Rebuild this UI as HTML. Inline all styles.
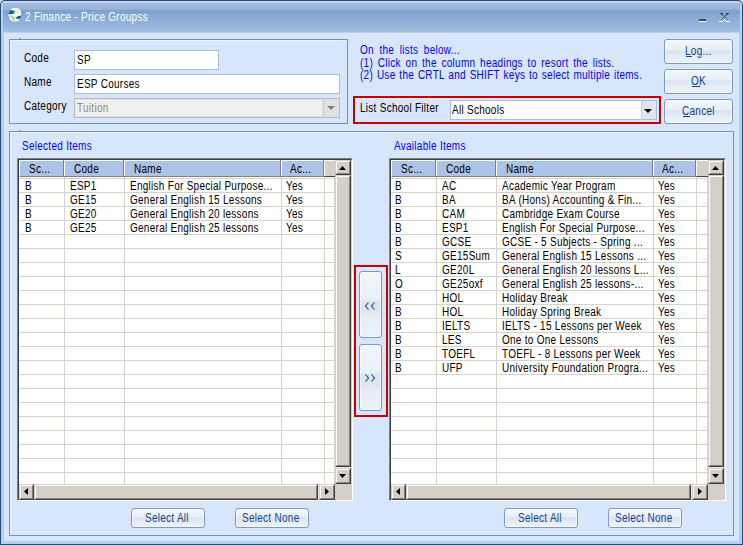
<!DOCTYPE html>
<html><head><meta charset="utf-8">
<style>
*{box-sizing:border-box}
html,body{margin:0;padding:0}
body{width:743px;height:545px;overflow:hidden;position:relative;background:#d8e6fb;font-family:"Liberation Sans",sans-serif;font-size:12px;color:#000}
.a{position:absolute}
.t{position:absolute;white-space:nowrap;line-height:13px;font-size:12px;letter-spacing:0.35px;transform:scaleX(0.83);transform-origin:0 0}
.u{position:absolute;height:1px;background:#15428b}
#frame{left:0;top:0;width:743px;height:545px;background:#2c4a74;border-radius:5px 5px 0 0}
#inner{left:1px;top:1px;width:741px;height:543px;background:#b4cff2;border-radius:4px 4px 0 0}
#title{left:3px;top:1px;width:737px;height:32px;border-radius:3px 3px 0 0;
 background:linear-gradient(#c0d7f6 0px,#c0d7f6 2px,#a2badc 2px,#9ab4d9 8px,#85a8d3 9px,#7ba1d0 10px,#85a8d5 14px,#9cb9e0 28px,#a2bfe5 31px,#b7d0f2 31px)}
#body{left:4px;top:33px;width:735px;height:508px;background:#d8e6fb}
.grp{position:absolute;border:1px solid #7090c2;box-shadow:inset 1px 1px 0 #e9f2fe}
.inp{position:absolute;background:#fff;border:1px solid #a9bfdc}
.btn{position:absolute;border:1px solid #7d98c4;border-radius:3px;
 background:linear-gradient(#f2f6fc 0%,#eaf0f9 42%,#dbe4f1 46%,#dde6f2 60%,#e5ecf6 68%,#edf2f9 100%);box-shadow:inset 0 0 0 1px rgba(255,255,255,.55)}
.lv{position:absolute;background:#fff;border-style:solid;border-width:1px;border-color:#808080 #fff #fff #808080}
.lvi{position:absolute;left:0;top:0;right:0;bottom:0;border-style:solid;border-width:1px 1px 0 1px;border-color:#404040 #d4d0c8 #d4d0c8 #404040;overflow:hidden}
.hd{position:absolute;top:0;height:17px;background:#abc3e7;border-top:1px solid #fff;border-left:1px solid #fff;border-bottom:1px solid #808080}
.sep{position:absolute;top:0;width:2px;height:16px;border-left:1px solid #808080;border-right:1px solid #fff}
.gv{position:absolute;width:1px;background:#d6d3ca}
.gh{position:absolute;height:1px;background:#d6d3ca}
.sb{position:absolute;background:#d4d0c8;border-style:solid;border-width:1px;border-color:#d4d0c8 #404040 #404040 #d4d0c8}
.sbi{position:absolute;left:0;top:0;right:0;bottom:0;border-style:solid;border-width:1px;border-color:#fff #808080 #808080 #fff}
.blue{color:#0000ff}
.nb{color:#15428b}
</style></head><body>
<div class="a" id="frame"></div>
<div class="a" id="inner"></div>
<div class="a" id="title"></div>
<div class="a" id="body"></div>
<svg class="a" style="left:7px;top:7px" width="16" height="16" viewBox="0 0 16 16">
 <circle cx="8" cy="7.8" r="7" fill="#f2f8e8"/>
 <path d="M3.5 8.5 L5.5 11 L7.5 13.5 M5.5 11 L8 10" stroke="#a9c77c" stroke-width="1.6" fill="none" opacity=".8"/>
 <circle cx="10" cy="5" r="2" fill="#e8f2d8"/>
 <path d="M3.0 2.9 L8.0 4.0 L6.5 7.0 L0.9 7.3 Z" fill="#0d5fb2"/>
 <path d="M8.5 11.6 L10.5 9.2 L15.1 8.3 L13.0 12.3 Z" fill="#0d5fb2"/>
 <path d="M1.2 8.5 A7 7 0 0 0 2.2 11.5" stroke="#3d7fc4" stroke-width="1" fill="none" opacity=".6"/>
 <path d="M14.6 5 A7 7 0 0 1 14.9 7.5" stroke="#1f6cbf" stroke-width="1.2" fill="none" opacity=".7"/>
</svg>
<div class="t" style="left:25px;top:11px;color:#fff">2 Finance - Price Groupss</div>
<div class="a" style="left:699px;top:19px;width:7px;height:2px;background:#414a58"></div>
<div class="a" style="left:699px;top:21px;width:7px;height:1px;background:#fff"></div>
<svg class="a" style="left:719px;top:12px" width="12" height="11" shape-rendering="crispEdges">
 <rect x="1" y="1" width="3" height="1" fill="#3d4450"/><rect x="7" y="1" width="3" height="1" fill="#3d4450"/>
 <rect x="2" y="2" width="2" height="1" fill="#4d5562"/><rect x="7" y="2" width="2" height="1" fill="#4d5562"/>
 <rect x="3" y="3" width="2" height="1" fill="#667080"/><rect x="6" y="3" width="2" height="1" fill="#667080"/>
 <rect x="4" y="4" width="3" height="2" fill="#737c8a"/>
 <rect x="3" y="6" width="2" height="1" fill="#7d8694"/><rect x="6" y="6" width="2" height="1" fill="#7d8694"/>
 <rect x="2" y="7" width="2" height="1" fill="#8a93a0"/><rect x="7" y="7" width="2" height="1" fill="#8a93a0"/>
 <rect x="5" y="7" width="1" height="1" fill="#ffffff"/>
 <rect x="4" y="8" width="1" height="1" fill="#ffffff"/><rect x="6" y="8" width="1" height="1" fill="#ffffff"/>
 <rect x="0" y="9" width="4" height="1" fill="#ffffff"/><rect x="7" y="9" width="4" height="1" fill="#ffffff"/>
</svg>
<div class="grp" style="left:9px;top:39px;width:339px;height:85px"></div>
<div class="a" style="left:19px;top:38px;width:2px;height:1px;background:#7d9ccc"></div>
<div class="t" style="left:24px;top:52px;">Code</div>
<div class="t" style="left:24px;top:76px;">Name</div>
<div class="t" style="left:24px;top:100px;">Category</div>
<div class="inp" style="left:74px;top:50px;width:145px;height:20px"></div>
<div class="t" style="left:77px;top:54px;">SP</div>
<div class="inp" style="left:74px;top:74px;width:266px;height:20px"></div>
<div class="t" style="left:77px;top:78px;">ESP Courses</div>
<div class="a" style="left:74px;top:98px;width:266px;height:20px;background:#f0f0f0;border:1px solid #bcbcbc"></div>
<div class="a" style="left:75px;top:99px;width:248px;height:18px;border:1px solid #e4e4e4"></div>
<div class="a" style="left:323px;top:99px;width:16px;height:18px;background:#e2e2e2;border-left:1px solid #cfcfcf"></div>
<svg class="a" style="left:323px;top:99px" width="16" height="18"><path d="M4 7h8l-4 4z" fill="#808080"/></svg>
<div class="t" style="left:77px;top:102px;color:#8d8d8d">Tuition</div>
<div class="t blue" style="left:360px;top:44px;word-spacing:3px">On the lists below...</div>
<div class="t blue" style="left:360px;top:57px;word-spacing:2.05px">(1) Click on the column headings to resort the lists.</div>
<div class="t blue" style="left:360px;top:69px;word-spacing:0.95px">(2) Use the CRTL and SHIFT keys to select multiple items.</div>
<div class="a" style="left:353px;top:96px;width:308px;height:28px;border:2px solid #c80000"></div>
<div class="t" style="left:360px;top:102px;">List School Filter</div>
<div class="inp" style="left:450px;top:100px;width:207px;height:20px"></div>
<div class="a" style="left:641px;top:101px;width:15px;height:18px;background:#dde6f2;border-left:1px solid #c9d6e8"></div>
<svg class="a" style="left:641px;top:101px" width="15" height="18"><path d="M3 8h8l-4 4z" fill="#000"/></svg>
<div class="t" style="left:452px;top:104px;">All Schools</div>
<div class="btn" style="left:664px;top:39px;width:69px;height:25px"></div>
<div class="t nb" style="left:685px;top:45px;">Log...</div>
<div class="u" style="left:686px;top:56px;width:6px"></div>
<div class="btn" style="left:664px;top:69px;width:69px;height:25px"></div>
<div class="t nb" style="left:691px;top:75px;">OK</div>
<div class="u" style="left:692px;top:86px;width:8px"></div>
<div class="btn" style="left:664px;top:99px;width:69px;height:25px"></div>
<div class="t nb" style="left:682px;top:105px;">Cancel</div>
<div class="u" style="left:683px;top:116px;width:7px"></div>
<div class="grp" style="left:9px;top:131px;width:725px;height:405px"></div>
<div class="a" style="left:19px;top:130px;width:2px;height:1px;background:#7d9ccc"></div>
<div class="t blue" style="left:22px;top:140px;">Selected Items</div>
<div class="t blue" style="left:394px;top:140px;">Available Items</div>
<div class="a" style="left:354px;top:265px;width:34px;height:152px;border:2px solid #c80000"></div>
<div class="btn" style="left:359px;top:271px;width:23px;height:67px"></div>
<div class="btn" style="left:359px;top:344px;width:23px;height:67px"></div>
<svg class="a" style="left:362px;top:301px" width="16" height="10"><path d="M6.5 1.5 L3.5 5 L6.5 8.5 M12.5 1.5 L9.5 5 L12.5 8.5" stroke="#1e3f8f" stroke-width="1.1" fill="none"/></svg>
<svg class="a" style="left:362px;top:373px" width="16" height="10"><path d="M3.5 1.5 L6.5 5 L3.5 8.5 M9.5 1.5 L12.5 5 L9.5 8.5" stroke="#1e3f8f" stroke-width="1.1" fill="none"/></svg>
<div class="btn" style="left:131px;top:508px;width:74px;height:20px"></div>
<div class="t nb" style="left:145px;top:512px;">Select All</div>
<div class="btn" style="left:235px;top:508px;width:74px;height:20px"></div>
<div class="t nb" style="left:242px;top:512px;">Select None</div>
<div class="btn" style="left:504px;top:508px;width:74px;height:20px"></div>
<div class="t nb" style="left:518px;top:512px;">Select All</div>
<div class="btn" style="left:608px;top:508px;width:74px;height:20px"></div>
<div class="t nb" style="left:615px;top:512px;">Select None</div>
<div class="lv" style="left:17px;top:158px;width:336px;height:343px"><div class="lvi">
<div class="hd" style="left:0;width:316px"></div>
<div class="sep" style="left:44px"></div>
<div class="sep" style="left:104px"></div>
<div class="sep" style="left:261px"></div>
<div class="sep" style="left:304px"></div>
<div class="a" style="left:306px;top:0;width:10px;height:17px;background:#d4d0c8;border-top:1px solid #fff;border-bottom:1px solid #404040"></div>
<div class="t" style="left:10px;top:3px;">Sc...</div>
<div class="t" style="left:55px;top:3px;">Code</div>
<div class="t" style="left:115px;top:3px;">Name</div>
<div class="t" style="left:271px;top:3px;">Ac...</div>
<div class="gv" style="left:45px;top:17px;height:307px"></div>
<div class="gv" style="left:105px;top:17px;height:307px"></div>
<div class="gv" style="left:262px;top:17px;height:307px"></div>
<div class="gv" style="left:305px;top:17px;height:307px"></div>
<div class="gv" style="left:315px;top:17px;height:307px"></div>
<div class="gh" style="left:0;top:18px;width:316px"></div>
<div class="gh" style="left:0;top:32px;width:316px"></div>
<div class="gh" style="left:0;top:46px;width:316px"></div>
<div class="gh" style="left:0;top:60px;width:316px"></div>
<div class="gh" style="left:0;top:74px;width:316px"></div>
<div class="gh" style="left:0;top:88px;width:316px"></div>
<div class="gh" style="left:0;top:102px;width:316px"></div>
<div class="gh" style="left:0;top:116px;width:316px"></div>
<div class="gh" style="left:0;top:130px;width:316px"></div>
<div class="gh" style="left:0;top:144px;width:316px"></div>
<div class="gh" style="left:0;top:158px;width:316px"></div>
<div class="gh" style="left:0;top:172px;width:316px"></div>
<div class="gh" style="left:0;top:186px;width:316px"></div>
<div class="gh" style="left:0;top:200px;width:316px"></div>
<div class="gh" style="left:0;top:214px;width:316px"></div>
<div class="gh" style="left:0;top:228px;width:316px"></div>
<div class="gh" style="left:0;top:242px;width:316px"></div>
<div class="gh" style="left:0;top:256px;width:316px"></div>
<div class="gh" style="left:0;top:270px;width:316px"></div>
<div class="gh" style="left:0;top:284px;width:316px"></div>
<div class="gh" style="left:0;top:298px;width:316px"></div>
<div class="gh" style="left:0;top:312px;width:316px"></div>
<div class="t" style="left:6px;top:20px;">B</div>
<div class="t" style="left:51px;top:20px;">ESP1</div>
<div class="t" style="left:111px;top:20px;">English For Special Purpose...</div>
<div class="t" style="left:267px;top:20px;">Yes</div>
<div class="t" style="left:6px;top:34px;">B</div>
<div class="t" style="left:51px;top:34px;">GE15</div>
<div class="t" style="left:111px;top:34px;">General English 15 Lessons</div>
<div class="t" style="left:267px;top:34px;">Yes</div>
<div class="t" style="left:6px;top:48px;">B</div>
<div class="t" style="left:51px;top:48px;">GE20</div>
<div class="t" style="left:111px;top:48px;">General English 20 lessons</div>
<div class="t" style="left:267px;top:48px;">Yes</div>
<div class="t" style="left:6px;top:62px;">B</div>
<div class="t" style="left:51px;top:62px;">GE25</div>
<div class="t" style="left:111px;top:62px;">General English 25 lessons</div>
<div class="t" style="left:267px;top:62px;">Yes</div>
<div class="sb" style="left:316px;top:0;width:16px;height:15px"><div class="sbi"></div></div>
<div class="sb" style="left:316px;top:15px;width:16px;height:292px"><div class="sbi"></div></div>
<div class="a" style="left:316px;top:307px;width:16px;height:1px;background-image:repeating-linear-gradient(90deg,#fff 0 1px,#d4d0c8 1px 2px)"></div>
<div class="sb" style="left:316px;top:308px;width:16px;height:16px"><div class="sbi"></div></div>
<svg class="a" style="left:316px;top:0" width="16" height="16"><path d="M4 10h7l-3.5-4z" fill="#000"/></svg>
<svg class="a" style="left:316px;top:308px" width="16" height="16"><path d="M4 6h7l-3.5 4z" fill="#000"/></svg>
<div class="a" style="left:0;top:324px;width:316px;height:16px;background:#d4d0c8"></div>
<div class="sb" style="left:0;top:324px;width:15px;height:16px"><div class="sbi"></div></div>
<div class="sb" style="left:15px;top:324px;width:284px;height:16px"><div class="sbi"></div></div>
<div class="a" style="left:299px;top:324px;width:1px;height:16px;background-image:repeating-linear-gradient(0deg,#fff 0 1px,#d4d0c8 1px 2px)"></div>
<div class="sb" style="left:300px;top:324px;width:16px;height:16px"><div class="sbi"></div></div>
<svg class="a" style="left:0;top:324px" width="16" height="16"><path d="M9 4v7l-4-3.5z" fill="#000"/></svg>
<svg class="a" style="left:300px;top:324px" width="16" height="16"><path d="M6 4v7l4-3.5z" fill="#000"/></svg>
<div class="a" style="left:316px;top:324px;width:16px;height:16px;background:#d4d0c8"></div>
</div></div>
<div class="lv" style="left:389px;top:158px;width:337px;height:343px"><div class="lvi">
<div class="hd" style="left:0;width:317px"></div>
<div class="sep" style="left:44px"></div>
<div class="sep" style="left:104px"></div>
<div class="sep" style="left:261px"></div>
<div class="sep" style="left:304px"></div>
<div class="a" style="left:306px;top:0;width:11px;height:17px;background:#d4d0c8;border-top:1px solid #fff;border-bottom:1px solid #404040"></div>
<div class="t" style="left:10px;top:3px;">Sc...</div>
<div class="t" style="left:55px;top:3px;">Code</div>
<div class="t" style="left:115px;top:3px;">Name</div>
<div class="t" style="left:271px;top:3px;">Ac...</div>
<div class="gv" style="left:45px;top:17px;height:307px"></div>
<div class="gv" style="left:105px;top:17px;height:307px"></div>
<div class="gv" style="left:262px;top:17px;height:307px"></div>
<div class="gv" style="left:305px;top:17px;height:307px"></div>
<div class="gv" style="left:316px;top:17px;height:307px"></div>
<div class="gh" style="left:0;top:18px;width:317px"></div>
<div class="gh" style="left:0;top:32px;width:317px"></div>
<div class="gh" style="left:0;top:46px;width:317px"></div>
<div class="gh" style="left:0;top:60px;width:317px"></div>
<div class="gh" style="left:0;top:74px;width:317px"></div>
<div class="gh" style="left:0;top:88px;width:317px"></div>
<div class="gh" style="left:0;top:102px;width:317px"></div>
<div class="gh" style="left:0;top:116px;width:317px"></div>
<div class="gh" style="left:0;top:130px;width:317px"></div>
<div class="gh" style="left:0;top:144px;width:317px"></div>
<div class="gh" style="left:0;top:158px;width:317px"></div>
<div class="gh" style="left:0;top:172px;width:317px"></div>
<div class="gh" style="left:0;top:186px;width:317px"></div>
<div class="gh" style="left:0;top:200px;width:317px"></div>
<div class="gh" style="left:0;top:214px;width:317px"></div>
<div class="gh" style="left:0;top:228px;width:317px"></div>
<div class="gh" style="left:0;top:242px;width:317px"></div>
<div class="gh" style="left:0;top:256px;width:317px"></div>
<div class="gh" style="left:0;top:270px;width:317px"></div>
<div class="gh" style="left:0;top:284px;width:317px"></div>
<div class="gh" style="left:0;top:298px;width:317px"></div>
<div class="gh" style="left:0;top:312px;width:317px"></div>
<div class="t" style="left:4px;top:20px;">B</div>
<div class="t" style="left:51px;top:20px;">AC</div>
<div class="t" style="left:111px;top:20px;">Academic Year Program</div>
<div class="t" style="left:267px;top:20px;">Yes</div>
<div class="t" style="left:4px;top:34px;">B</div>
<div class="t" style="left:51px;top:34px;">BA</div>
<div class="t" style="left:111px;top:34px;">BA (Hons) Accounting &amp; Fin...</div>
<div class="t" style="left:267px;top:34px;">Yes</div>
<div class="t" style="left:4px;top:48px;">B</div>
<div class="t" style="left:51px;top:48px;">CAM</div>
<div class="t" style="left:111px;top:48px;">Cambridge Exam Course</div>
<div class="t" style="left:267px;top:48px;">Yes</div>
<div class="t" style="left:4px;top:62px;">B</div>
<div class="t" style="left:51px;top:62px;">ESP1</div>
<div class="t" style="left:111px;top:62px;">English For Special Purpose...</div>
<div class="t" style="left:267px;top:62px;">Yes</div>
<div class="t" style="left:4px;top:76px;">B</div>
<div class="t" style="left:51px;top:76px;">GCSE</div>
<div class="t" style="left:111px;top:76px;">GCSE - 5 Subjects - Spring ...</div>
<div class="t" style="left:267px;top:76px;">Yes</div>
<div class="t" style="left:4px;top:90px;">S</div>
<div class="t" style="left:51px;top:90px;">GE15Sum</div>
<div class="t" style="left:111px;top:90px;">General English 15 Lessons ...</div>
<div class="t" style="left:267px;top:90px;">Yes</div>
<div class="t" style="left:4px;top:104px;">L</div>
<div class="t" style="left:51px;top:104px;">GE20L</div>
<div class="t" style="left:111px;top:104px;">General English 20 lessons L...</div>
<div class="t" style="left:267px;top:104px;">Yes</div>
<div class="t" style="left:4px;top:118px;">O</div>
<div class="t" style="left:51px;top:118px;">GE25oxf</div>
<div class="t" style="left:111px;top:118px;">General English 25 lessons-...</div>
<div class="t" style="left:267px;top:118px;">Yes</div>
<div class="t" style="left:4px;top:132px;">B</div>
<div class="t" style="left:51px;top:132px;">HOL</div>
<div class="t" style="left:111px;top:132px;">Holiday Break</div>
<div class="t" style="left:267px;top:132px;">Yes</div>
<div class="t" style="left:4px;top:146px;">B</div>
<div class="t" style="left:51px;top:146px;">HOL</div>
<div class="t" style="left:111px;top:146px;">Holiday Spring Break</div>
<div class="t" style="left:267px;top:146px;">Yes</div>
<div class="t" style="left:4px;top:160px;">B</div>
<div class="t" style="left:51px;top:160px;">IELTS</div>
<div class="t" style="left:111px;top:160px;">IELTS - 15 Lessons per Week</div>
<div class="t" style="left:267px;top:160px;">Yes</div>
<div class="t" style="left:4px;top:174px;">B</div>
<div class="t" style="left:51px;top:174px;">LES</div>
<div class="t" style="left:111px;top:174px;">One to One Lessons</div>
<div class="t" style="left:267px;top:174px;">Yes</div>
<div class="t" style="left:4px;top:188px;">B</div>
<div class="t" style="left:51px;top:188px;">TOEFL</div>
<div class="t" style="left:111px;top:188px;">TOEFL - 8 Lessons per Week</div>
<div class="t" style="left:267px;top:188px;">Yes</div>
<div class="t" style="left:4px;top:202px;">B</div>
<div class="t" style="left:51px;top:202px;">UFP</div>
<div class="t" style="left:111px;top:202px;">University Foundation Progra...</div>
<div class="t" style="left:267px;top:202px;">Yes</div>
<div class="sb" style="left:317px;top:0;width:16px;height:15px"><div class="sbi"></div></div>
<div class="sb" style="left:317px;top:15px;width:16px;height:292px"><div class="sbi"></div></div>
<div class="a" style="left:317px;top:307px;width:16px;height:1px;background-image:repeating-linear-gradient(90deg,#fff 0 1px,#d4d0c8 1px 2px)"></div>
<div class="sb" style="left:317px;top:308px;width:16px;height:16px"><div class="sbi"></div></div>
<svg class="a" style="left:317px;top:0" width="16" height="16"><path d="M4 10h7l-3.5-4z" fill="#000"/></svg>
<svg class="a" style="left:317px;top:308px" width="16" height="16"><path d="M4 6h7l-3.5 4z" fill="#000"/></svg>
<div class="a" style="left:0;top:324px;width:317px;height:16px;background:#d4d0c8"></div>
<div class="sb" style="left:0;top:324px;width:15px;height:16px"><div class="sbi"></div></div>
<div class="sb" style="left:15px;top:324px;width:285px;height:16px"><div class="sbi"></div></div>
<div class="a" style="left:300px;top:324px;width:1px;height:16px;background-image:repeating-linear-gradient(0deg,#fff 0 1px,#d4d0c8 1px 2px)"></div>
<div class="sb" style="left:301px;top:324px;width:16px;height:16px"><div class="sbi"></div></div>
<svg class="a" style="left:0;top:324px" width="16" height="16"><path d="M9 4v7l-4-3.5z" fill="#000"/></svg>
<svg class="a" style="left:301px;top:324px" width="16" height="16"><path d="M6 4v7l4-3.5z" fill="#000"/></svg>
<div class="a" style="left:317px;top:324px;width:16px;height:16px;background:#d4d0c8"></div>
</div></div>
</body></html>
